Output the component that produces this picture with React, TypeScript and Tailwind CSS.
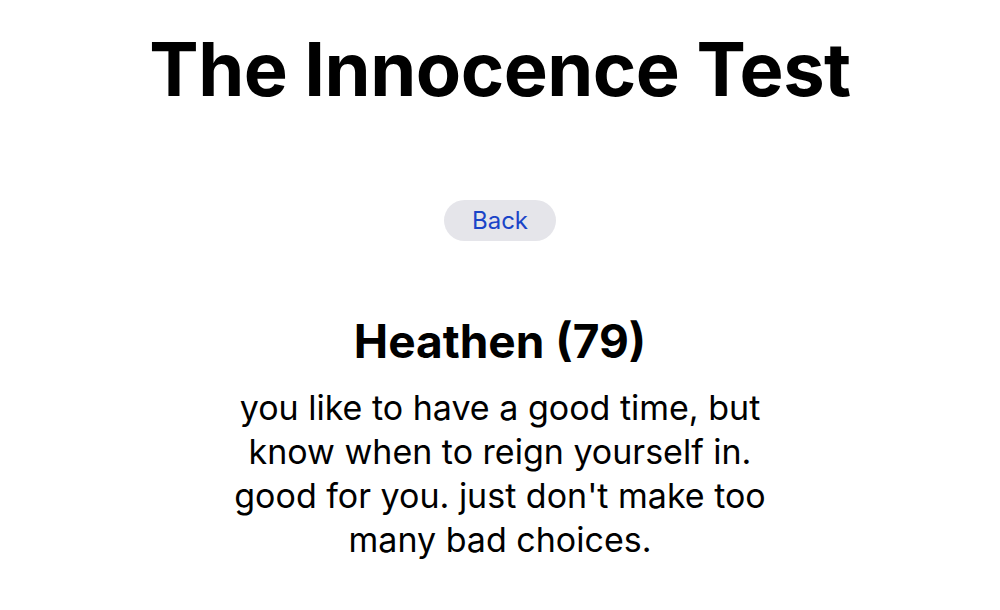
export default function App() {
  return (
    <div
      className="min-h-[610px] bg-white text-black flex flex-col items-center"
      style={{ fontFamily: 'Inter, "Noto Sans", sans-serif' }}
    >
      <h1 className="mt-[24px] text-[74px] leading-[90px] font-bold tracking-[-0.5px]">
        The Innocence Test
      </h1>

      <button
        type="button"
        className="mt-[86px] w-[112px] h-[41px] rounded-full bg-[#e5e5ea] text-[#1a44c8] text-[24px] leading-none"
      >
        Back
      </button>

      <h2 className="mt-[74px] text-[46px] leading-[52px] font-bold">Heathen (79)</h2>
      <p className="mt-[19px] w-[580px] text-center text-[34px] leading-[44px]">
        you like to have a good time, but know when to reign yourself in. good for you. just
        don't make too many bad choices.
      </p>
    </div>
  )
}
